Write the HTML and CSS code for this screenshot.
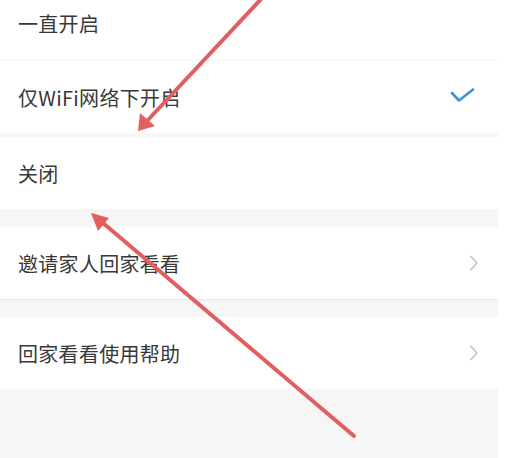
FILE: index.html
```html
<!DOCTYPE html>
<html lang="zh-CN">
<head>
    <meta charset="UTF-8">
    <meta name="viewport" content="width=device-width, initial-scale=1.0">
    <title>回家看看设置</title>
    <link rel="stylesheet" href="styles.css">
</head>
<body>
    <div class="screen">
        <div class="group group-top">
            <div class="row">
                <span class="row-label">一直开启</span>
            </div>
            <div class="divider"></div>
            <div class="row">
                <span class="row-label">仅WiFi网络下开启</span>
                <svg class="row-check" width="26" height="18" viewBox="0 0 26 18">
                    <path d="M2 5 L9 12.5 L23 1.5" fill="none" stroke="#3b95d2" stroke-width="2.6" stroke-linecap="round" stroke-linejoin="round"/>
                </svg>
            </div>
            <div class="divider divider-thick"></div>
            <div class="row">
                <span class="row-label">关闭</span>
            </div>
        </div>

        <div class="group group-gap">
            <div class="row">
                <span class="row-label">邀请家人回家看看</span>
                <svg class="row-arrow" width="10" height="16" viewBox="0 0 10 16">
                    <path d="M2 1.5 L8 8 L2 14.5" fill="none" stroke="#c4c4c4" stroke-width="1.8" stroke-linecap="round" stroke-linejoin="round"/>
                </svg>
            </div>
            <div class="divider divider-line"></div>
        </div>

        <div class="group group-help">
            <div class="row">
                <span class="row-label">回家看看使用帮助</span>
                <svg class="row-arrow" width="10" height="16" viewBox="0 0 10 16">
                    <path d="M2 1.5 L8 8 L2 14.5" fill="none" stroke="#c4c4c4" stroke-width="1.8" stroke-linecap="round" stroke-linejoin="round"/>
                </svg>
            </div>
        </div>
    </div>

    <!-- annotation arrows drawn over the screenshot -->
    <svg class="annotations" width="507" height="458" viewBox="0 0 507 458">
        <line x1="263" y1="-3" x2="147" y2="121" stroke="#e35f5f" stroke-width="4" stroke-linecap="round"/>
        <polygon points="138,131 140,113 155,126" fill="#e35f5f"/>
        <line x1="354" y1="436" x2="103" y2="223" stroke="#e35f5f" stroke-width="4" stroke-linecap="round"/>
        <polygon points="91,213 109,218 98,231" fill="#e35f5f"/>
    </svg>
</body>
</html>
```

FILE: styles.css
```css
html, body {
    margin: 0;
    padding: 0;
}

body {
    width: 507px;
    height: 458px;
    overflow: hidden;
    background-color: #ffffff;
    font-family: "Noto Sans CJK SC", "Noto Sans", sans-serif;
    position: relative;
}

.screen {
    width: 498px;
    height: 458px;
    background-color: #f6f6f6;
    overflow: hidden;
}

.group {
    display: flex;
    flex-direction: column;
}

.group-top {
    margin-top: -13px;
}

.group-gap {
    margin-top: 18px;
}

.group-help {
    margin-top: 17px;
}

.row {
    display: flex;
    align-items: center;
    justify-content: space-between;
    height: 72px;
    padding: 0 19px 0 18px;
    background-color: #ffffff;
}

.row-label {
    font-size: 20px;
    color: #383838;
    letter-spacing: 0.3px;
}

.row-check {
    margin-right: 3px;
}

.divider {
    height: 2px;
    background-color: #f8f8f8;
}

.divider-thick {
    height: 4px;
}

.divider-line {
    height: 1px;
    background-color: #e9e9e9;
}

.annotations {
    position: absolute;
    top: 0;
    left: 0;
    pointer-events: none;
}
```
